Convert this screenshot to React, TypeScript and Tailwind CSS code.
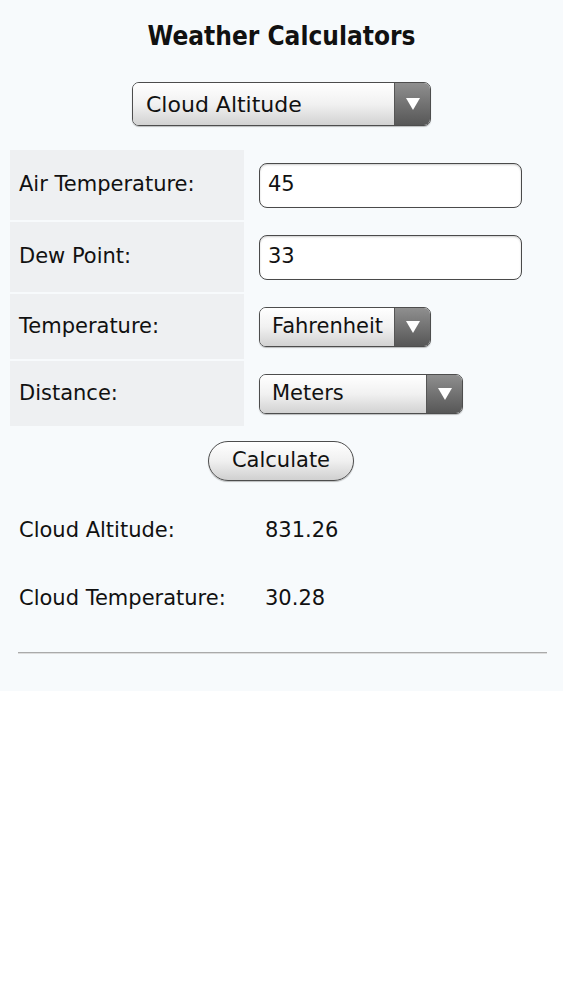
import React from "react";

const font = { fontFamily: '"DejaVu Sans", sans-serif' };
const titleFont = { fontFamily: '"DejaVu Sans Condensed", "DejaVu Sans", sans-serif' };

function Select({ label, width, size }: { label: string; width: string; size: string }) {
  return (
    <div
      className={`flex h-full ${width} overflow-hidden rounded-[7px] border border-[#4d4d4d] shadow-[0_1px_1px_rgba(0,0,0,0.25)]`}
    >
      <div
        className={`flex flex-1 items-center bg-gradient-to-b from-[#ffffff] via-[#f1f1f1] to-[#d2d2d2] pl-[12px] text-[#111] ${size}`}
      >
        {label}
      </div>
      <div className="flex w-[36px] items-center justify-center border-l border-[#555] bg-gradient-to-b from-[#8f8f8f] to-[#575757]">
        <svg width="16" height="14" viewBox="0 0 16 14">
          <path d="M1 1 L15 1 L8 13 Z" fill="#fff" />
        </svg>
      </div>
    </div>
  );
}

function Input({ value }: { value: string }) {
  return (
    <div className="flex h-[45px] w-[263px] items-center rounded-[8px] border border-[#4a4a4a] bg-white pl-[8px] text-[#111] shadow-[inset_0_1px_2px_rgba(0,0,0,0.2)]">
      {value}
    </div>
  );
}

export default function App() {
  return (
    <div className="min-h-[1000px] bg-white" style={font}>
      <div className="bg-[#f7fafc] pb-[37px] text-[21px] text-[#111]">
        <div
          className="pt-[19px] text-center text-[26px] font-bold leading-[34px] text-[#111]"
          style={titleFont}
        >
          Weather Calculators
        </div>
        <div className="mt-[29px] flex justify-center">
          <div className="h-[44px]">
            <Select label="Cloud Altitude" width="w-[299px]" size="text-[22px] pl-[13px]" />
          </div>
        </div>
        <div className="mt-[24px] ml-[10px] grid grid-cols-[234px_1fr] gap-y-[2px]">
          <div className="flex h-[70px] items-center bg-[#eef0f2] pl-[9px]">Air Temperature:</div>
          <div className="flex items-center pl-[15px]">
            <Input value="45" />
          </div>
          <div className="flex h-[70px] items-center bg-[#eef0f2] pl-[9px]">Dew Point:</div>
          <div className="flex items-center pl-[15px]">
            <Input value="33" />
          </div>
          <div className="flex h-[65px] items-center bg-[#eef0f2] pl-[9px]">Temperature:</div>
          <div className="flex items-center pl-[15px]">
            <div className="h-[40px]">
              <Select label="Fahrenheit" width="w-[172px]" size="text-[21px]" />
            </div>
          </div>
          <div className="flex h-[65px] items-center bg-[#eef0f2] pl-[9px]">Distance:</div>
          <div className="flex items-center pl-[15px]">
            <div className="h-[40px]">
              <Select label="Meters" width="w-[204px]" size="text-[21px]" />
            </div>
          </div>
        </div>
        <div className="mt-[15px] flex justify-center">
          <button
            className="ml-[-1px] h-[40px] w-[146px] rounded-full border border-[#4d4d4d] bg-gradient-to-b from-[#ffffff] via-[#f0f0f0] to-[#d0d0d0] text-[21px] text-[#111] shadow-[0_1px_1px_rgba(0,0,0,0.25)]"
            style={font}
          >
            Calculate
          </button>
        </div>
        <div className="mt-[22px] grid grid-cols-[246px_1fr] px-[19px]">
          <div className="flex h-[56px] items-center">Cloud Altitude:</div>
          <div className="flex items-center">831.26</div>
          <div className="mt-[12px] flex h-[56px] items-center">Cloud Temperature:</div>
          <div className="mt-[12px] flex items-center">30.28</div>
        </div>
        <div className="ml-[18px] mr-[16px] mt-[25px] h-[2px] border-t border-[#aaaaaa] bg-[#dddddd]" />
      </div>
    </div>
  );
}
